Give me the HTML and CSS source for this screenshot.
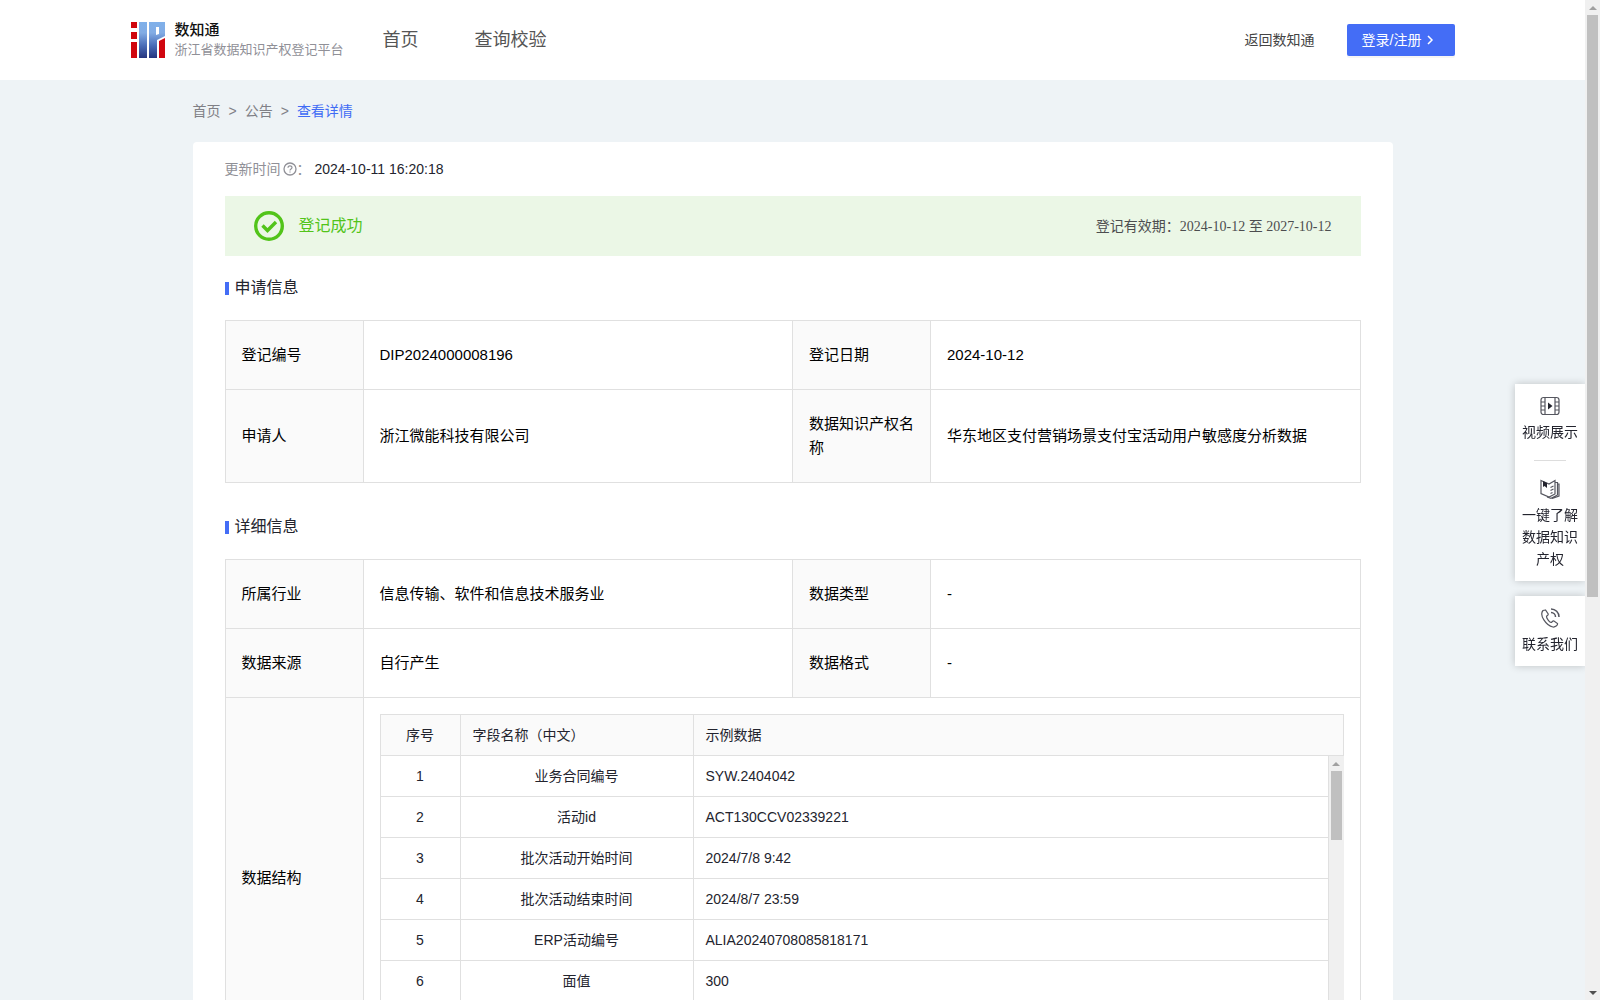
FILE: index.html
```html
<!DOCTYPE html>
<html lang="zh-CN">

<head>
  <meta charset="UTF-8">
  <meta name="viewport" content="width=device-width, initial-scale=1.0">
  <link rel="stylesheet" href="styles.css">
  <title>查看详情</title>
</head>

<body>

  <div class="page">
    <header class="header">
      <div class="header-inner">
        <a class="logo" href="#">
          <svg width="34" height="36" viewBox="0 0 34 36">
            <defs>
              <linearGradient id="blue" x1="0" y1="0" x2="0" y2="36" gradientUnits="userSpaceOnUse">
                <stop offset="0" stop-color="#7fb0ea" />
                <stop offset="0.3" stop-color="#82ace4" />
                <stop offset="0.65" stop-color="#4a6db8" />
                <stop offset="1" stop-color="#26357f" />
              </linearGradient>
            </defs>
            <path fill="#d0060f" d="M0 0h6v6H0zM0 10h6v7H0zM0 20h6v16H0z" />
            <path fill="url(#blue)" d="M8 0h8v36H8z" />
            <path fill="url(#blue)" fill-rule="evenodd" d="M18 0h16v14l-8 4v18h-8zM25 5v8l3-1V5z" />
            <path fill="#d0060f" d="M28 19l6-3v20h-6z" />
          </svg>
          <span class="logo-text">
            <strong>数知通</strong>
            <span>浙江省数据知识产权登记平台</span>
          </span>
        </a>
        <nav class="nav">
          <a href="#">首页</a>
          <a href="#">查询校验</a>
        </nav>
        <div class="header-right">
          <a href="#">返回数知通</a>
          <button class="login" type="button">登录/注册
            <svg width="10" height="10" viewBox="0 0 10 10"><path d="M3 1l4 4-4 4" fill="none" stroke="#fff" stroke-width="1.5" /></svg>
          </button>
        </div>
      </div>
    </header>

    <main class="main">
      <div class="breadcrumb">
        <a href="#">首页</a>
        <span>&gt;</span>
        <a href="#">公告</a>
        <span>&gt;</span>
        <a class="current" href="#">查看详情</a>
      </div>

      <div class="card">
        <div class="update">
          <span>更新时间</span>
          <svg width="14" height="14" viewBox="0 0 14 14" fill="none" stroke="#909097">
            <circle cx="7" cy="7" r="6" stroke-width="1.3" />
            <path d="M5 5.7C5 3.2 9 3.2 9 5.6 9 7 7 7 7 8.5M7 9.4v1.2" stroke-width="1.2" />
          </svg>
          <span>：</span>
          <span class="update-time">2024-10-11 16:20:18</span>
        </div>

        <div class="status">
          <svg width="30" height="30" viewBox="0 0 30 30" fill="none" stroke="#52c41a">
            <circle cx="15" cy="15" r="13.3" stroke-width="3.4" />
            <path d="M8.5 14.5l5 5 8.5-8.5" stroke-width="3.4" />
          </svg>
          <span class="status-text">登记成功</span>
          <span class="status-date">登记有效期：<span class="date">2024-10-12 至 2027-10-12</span></span>
        </div>

        <h2 class="title">申请信息</h2>
        <table class="info">
          <colgroup><col class="col-label"><col><col class="col-label"><col></colgroup>
          <tr>
            <th>登记编号</th>
            <td>DIP2024000008196</td>
            <th>登记日期</th>
            <td>2024-10-12</td>
          </tr>
          <tr>
            <th>申请人</th>
            <td>浙江微能科技有限公司</td>
            <th>数据知识产权名称</th>
            <td>华东地区支付营销场景支付宝活动用户敏感度分析数据</td>
          </tr>
        </table>

        <h2 class="title title-detail">详细信息</h2>
        <table class="info">
          <colgroup><col class="col-label"><col><col class="col-label"><col></colgroup>
          <tr>
            <th>所属行业</th>
            <td>信息传输、软件和信息技术服务业</td>
            <th>数据类型</th>
            <td>-</td>
          </tr>
          <tr>
            <th>数据来源</th>
            <td>自行产生</td>
            <th>数据格式</th>
            <td>-</td>
          </tr>
          <tr>
            <th>数据结构</th>
            <td class="nested" colspan="3">
              <table class="fields">
                <colgroup><col class="col-no"><col class="col-name"><col></colgroup>
                <tr>
                  <th>序号</th>
                  <th>字段名称（中文）</th>
                  <th>示例数据</th>
                </tr>
              </table>
              <div class="fields-body">
                <table class="fields">
                  <colgroup><col class="col-no"><col class="col-name"><col></colgroup>
                  <tr><td>1</td><td>业务合同编号</td><td>SYW.2404042</td></tr>
                  <tr><td>2</td><td>活动id</td><td>ACT130CCV02339221</td></tr>
                  <tr><td>3</td><td>批次活动开始时间</td><td>2024/7/8 9:42</td></tr>
                  <tr><td>4</td><td>批次活动结束时间</td><td>2024/8/7 23:59</td></tr>
                  <tr><td>5</td><td>ERP活动编号</td><td>ALIA20240708085818171</td></tr>
                  <tr><td>6</td><td>面值</td><td>300</td></tr>
                </table>
                <div class="scrollbar">
                  <span class="arrow arrow-up"></span>
                  <div class="track"><div class="thumb thumb-fields"></div></div>
                  <span class="arrow arrow-down"></span>
                </div>
              </div>
            </td>
          </tr>
        </table>
      </div>
    </main>
  </div>

  <div class="scrollbar">
    <span class="arrow arrow-up"></span>
    <div class="track"><div class="thumb thumb-page"></div></div>
    <span class="arrow arrow-down"></span>
  </div>

  <aside class="side">
    <div class="side-box">
      <a href="#">
        <svg width="20" height="20" viewBox="0 0 20 20" fill="none" stroke="#55565f" stroke-width="1.2">
          <rect x="1" y="1.5" width="18" height="17" rx="2.5" />
          <path d="M5 1.5v17M15 1.5v17M1 6h4M1 10h4M1 14h4M15 6h4M15 10h4M15 14h4" />
          <path d="M8 6.5v7l4.5-3.5z" fill="#23242e" stroke="none" />
        </svg>
        视频展示
      </a>
      <a href="#">
        <svg width="20" height="20" viewBox="0 0 20 20" fill="none" stroke="#55565f" stroke-width="1.2">
          <path d="M1 1.5l8 3.5 6-3.5v13.500L9 18l-8-3.500z" />
          <path d="M15 3.500h2.500v12.500L11 19.300 7 18M17.500 5H19v12l-7 2.500M10.500 8.500l3-1.500M10.500 11.500l3-1.500M10.500 14.500l2-1" />
          <path d="M3 2v6l1.500-1L7 9V4z" fill="#23242e" stroke="none" />
        </svg>
        一键了解数据知识产权
      </a>
    </div>
    <div class="side-box">
      <a href="#">
        <svg width="20" height="20" viewBox="0 0 20 20" fill="none" stroke="#55565f" stroke-width="1.2">
          <path d="M5.5 2L3 2.5C-1 7 6 17.5 13 19c2 .3 5-1.5 4.500-3.500l-3.500-2.500c-1.500-.5-2 1.500-3 1.500-2-.5-4.500-4.500-4.500-6 .5-1 2-1.200 1.700-2.500z" />
          <path d="M11 4.500c2.500 0 4.500 2 4.500 4.500M11 1c4.500 0 8 3.500 8 8" stroke-width="1.5" />
        </svg>
        联系我们
      </a>
    </div>
  </aside>

</body>

</html>
```

FILE: styles.css
```css
* {
  margin: 0;
  padding: 0;
  box-sizing: border-box;
}

body {
  display: flex;
  height: 100vh;
  overflow: hidden;
  font-family: "Liberation Sans", "Noto Sans CJK SC", sans-serif;
  font-size: 14px;
  line-height: 22px;
  color: #23242e;
  background: #eef3f6;
}

a {
  color: inherit;
  text-decoration: none;
}

svg {
  flex-shrink: 0;
}

.page {
  flex: 1;
  min-width: 0;
  overflow: hidden;
}

/* header */
.header {
  background: #fff;
}

.header-inner {
  display: flex;
  align-items: center;
  max-width: 1324px;
  height: 80px;
  margin: 0 auto;
}

.logo {
  display: flex;
  align-items: center;
  gap: 10px;
}

.logo-text {
  display: flex;
  flex-direction: column;
  font-size: 13px;
  line-height: 20px;
  color: #909097;
}

.logo-text strong {
  font-size: 15px;
  font-weight: 500;
  color: #111;
}

.nav {
  display: flex;
  gap: 56px;
  margin-left: 39px;
  font-size: 18px;
  color: #555;
}

.header-right {
  display: flex;
  align-items: center;
  gap: 32px;
  margin-left: auto;
  color: #444;
}

.login {
  display: flex;
  align-items: center;
  gap: 4px;
  width: 108px;
  height: 32px;
  padding: 0 15px;
  border: 0;
  border-radius: 2px;
  font: inherit;
  color: #fff;
  background: #446df6;
  box-shadow: 0 2px 0 rgba(0, 0, 0, 0.04);
  cursor: pointer;
}

/* content */
.main {
  max-width: 1200px;
  margin: 0 auto;
}

.breadcrumb {
  display: flex;
  gap: 8px;
  padding: 20px 0;
  color: #808086;
}

.breadcrumb .current {
  color: #3f6bf5;
}

.card {
  padding: 16px 32px;
  border-radius: 4px;
  background: #fff;
}

.update {
  display: flex;
  align-items: center;
  color: #909097;
}

.update svg {
  margin-left: 2px;
}

.update-time {
  margin-left: 4px;
  color: #23242e;
}

.status {
  display: flex;
  align-items: center;
  height: 60px;
  margin-top: 16px;
  padding: 0 29px;
  background: #ebf7e6;
}

.status-text {
  margin-left: 15px;
  font-size: 16px;
  color: #52c41a;
}

.status-date {
  margin-left: auto;
  color: #4c4d4f;
}

.date {
  font-family: "Liberation Serif", "Noto Sans CJK SC", serif;
}

.title {
  display: flex;
  align-items: center;
  gap: 6px;
  padding: 20px 0;
  font-size: 16px;
  font-weight: 400;
  line-height: 24px;
}

.title::before {
  content: "";
  width: 4px;
  height: 13px;
  background: #446df6;
}

.title-detail {
  margin-top: 12px;
}

.info,
.fields {
  width: 100%;
  border-collapse: collapse;
  table-layout: fixed;
}

.info > tbody > tr > th,
.info > tbody > tr > td {
  padding: 22px 16px;
  border: 1px solid #e0e0e0;
  font-size: 15px;
  font-weight: 400;
  line-height: 24px;
  text-align: left;
  color: #000;
}

.info > tbody > tr > th {
  background: #fafafa;
}

.info > tbody > tr > .nested {
  padding: 16px;
}

.col-label {
  width: 138px;
}

/* field list */
.col-no {
  width: 80px;
}

.col-name {
  width: 233px;
}

.fields th,
.fields td {
  padding: 9px 12px;
  border: 1px solid #e0e0e0;
  font-size: 14px;
  font-weight: 400;
  line-height: 22px;
  text-align: left;
  color: #23242e;
}

.fields th {
  background: #fafafa;
}

.fields th:first-child,
.fields td:first-child,
.fields td:nth-child(2) {
  text-align: center;
}

.fields-body {
  display: flex;
  align-items: flex-start;
  height: 286px;
  overflow: hidden;
}

.fields-body .fields {
  flex: 1;
}

.fields-body tr:first-child td {
  border-top: 0;
}

/* scrollbars */
.scrollbar {
  display: flex;
  flex-direction: column;
  flex-shrink: 0;
  width: 15px;
  height: 100%;
  background: #f0f0f0;
}

.arrow {
  display: flex;
  align-items: center;
  justify-content: center;
  height: 15px;
}

.arrow::before {
  content: "";
  border: 4px solid transparent;
}

.arrow-up::before {
  border-top: 0;
  border-bottom-color: #a0a0a0;
}

.arrow-down::before {
  border-bottom: 0;
  border-top-color: #505050;
}

.track {
  flex: 1;
  padding: 0 2px;
}

.thumb {
  background: #c0c0c0;
}

.thumb-page {
  height: 60%;
}

.thumb-fields {
  height: 27%;
}

/* side menu */
.side {
  position: fixed;
  top: 384px;
  right: 15px;
  display: flex;
  flex-direction: column;
  gap: 15px;
  width: 70px;
}

.side-box {
  background: #fff;
  box-shadow: 0 0 8px rgba(0, 0, 0, 0.2);
  clip-path: inset(-10px 0 -10px -10px);
}

.side-box a {
  display: flex;
  flex-direction: column;
  align-items: center;
  gap: 5px;
  padding: 12px 6px 11px;
  text-align: center;
}

.side-box a + a {
  padding-top: 6px;
}

.side-box a + a::before {
  content: "";
  width: 32px;
  height: 1px;
  margin-bottom: 13px;
  background: #ddd;
}
```
